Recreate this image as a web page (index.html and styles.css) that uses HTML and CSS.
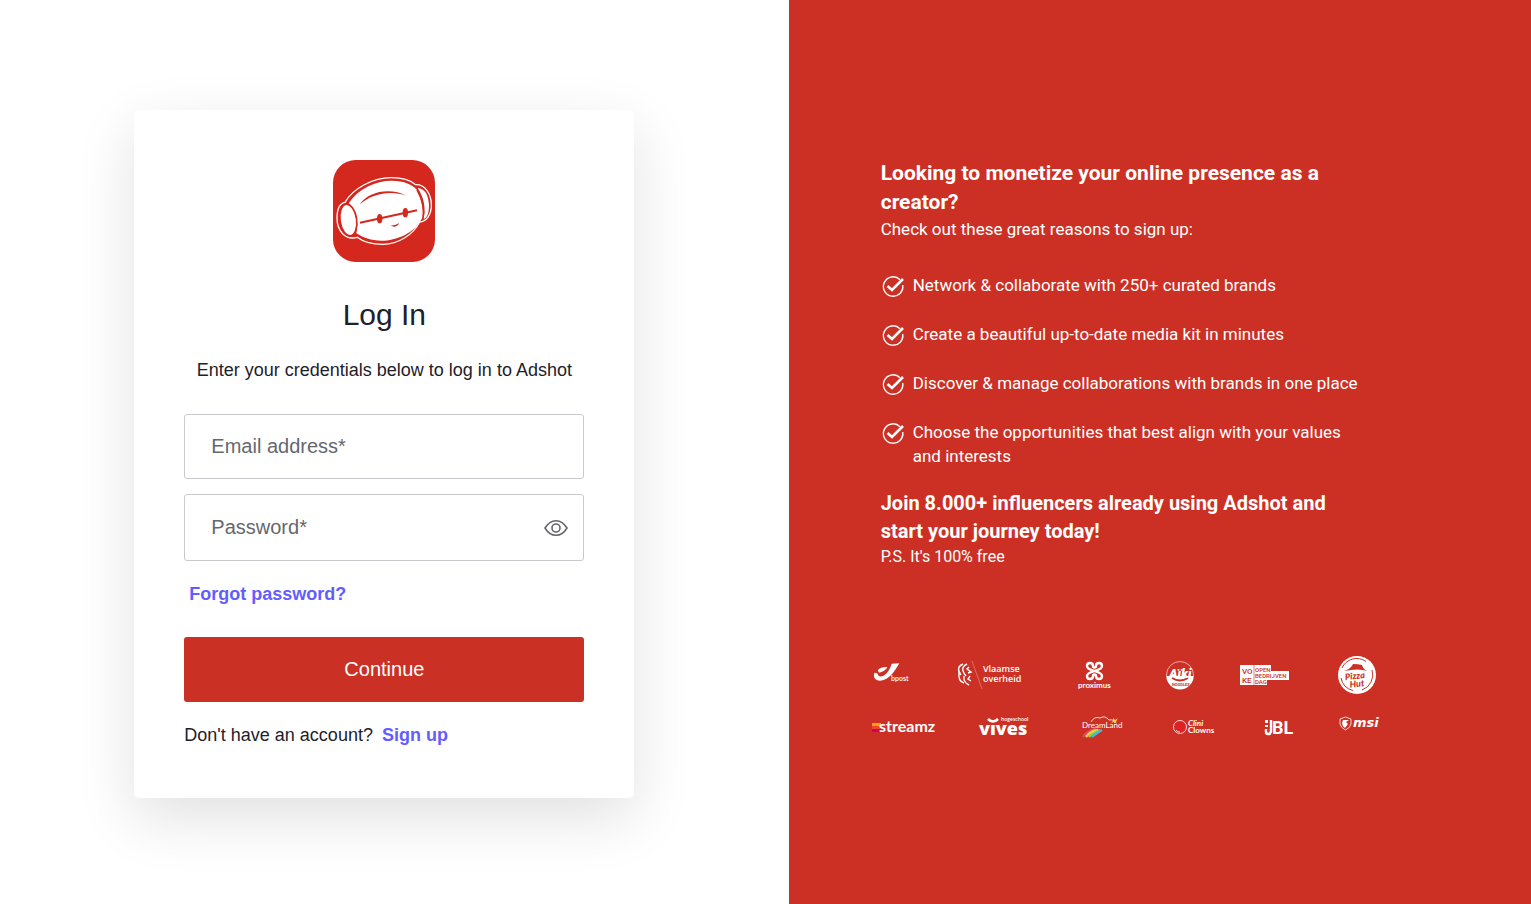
FILE: index.html
```html
<!DOCTYPE html>
<html lang="en">
<head>
    <meta charset="UTF-8">
    <meta name="viewport" content="width=device-width, initial-scale=1.0">
    <title>Log in | Adshot</title>
    <link rel="stylesheet" href="styles.css">
</head>
<body>
    <div class="page">
        <main class="login">
            <form class="card">
                <svg class="logo" viewBox="30 30 306 306" role="img" aria-label="Adshot">
                    <rect x="30" y="30" width="306" height="306" rx="68" fill="#d4271d"/>
                    <path d="M66 157C90 115 150 83 205 83C240 83 262 90 278 104C305 103 325 130 325 165C325 195 310 215 290 216C270 255 225 283 180 283C150 283 120 276 103 262C65 272 42 240 42 205C42 180 50 160 66 157z" fill="none" stroke="#fff" stroke-width="4"/>
                    <path d="M77 160C105 115 160 92 205 92C245 93 268 103 281 119C293 142 302 172 298 203C275 250 220 272 175 272C145 272 120 263 100 250C108 215 98 180 77 160z" fill="#fff"/>
                    <ellipse cx="76" cy="210" rx="25" ry="48" transform="rotate(-8 76 210)" fill="#fff" stroke="#d4271d" stroke-width="5"/>
                    <path d="M284 114C305 115 317 135 318 165C318 190 312 205 300 208C311 178 302 140 284 114z" fill="#fff"/>
                    <path d="M282 120C296 145 307 178 300 208" fill="none" stroke="#d4271d" stroke-width="4"/>
                    <path d="M110 164C135 122 205 112 250 137C205 120 145 130 110 164z" fill="#d4271d"/>
                    <path d="M111 218L282 181" stroke="#d4271d" stroke-width="6"/>
                    <ellipse cx="170" cy="206" rx="8" ry="14" fill="#d4271d"/>
                    <ellipse cx="247" cy="188" rx="8" ry="14" fill="#d4271d"/>
                    <path d="M202 226Q216 228 229 219Q218 237 202 226z" fill="#d4271d"/>
                </svg>
                <h1>Log In</h1>
                <p class="intro">Enter your credentials below to log in to Adshot</p>

                <div class="field email">
                    <input id="email" type="email" placeholder=" " required>
                    <label for="email">Email address*</label>
                </div>

                <div class="field password">
                    <input id="password" type="password" placeholder=" " required>
                    <label for="password">Password*</label>
                    <button class="show-password" type="button" aria-label="Show password">
                        <svg viewBox="0 0 24 18" width="24" height="18" fill="none" stroke="#65676e" stroke-width="1.6">
                            <path d="M1 9C4 4 8 1.7 12 1.7S20 4 23 9C20 14 16 16.3 12 16.3S4 14 1 9z"/>
                            <circle cx="12" cy="9" r="4"/>
                        </svg>
                    </button>
                </div>

                <a class="link forgot" href="#">Forgot password?</a>
                <button class="continue" type="submit">Continue</button>
                <p class="signup">Don't have an account? <a class="link" href="#">Sign up</a></p>
            </form>
        </main>

        <aside class="promo">
            <div class="promo-text">
                <h2>Looking to monetize your online presence as a creator?</h2>
                <p>Check out these great reasons to sign up:</p>
                <ul class="reasons">
                    <li>
                        <svg class="check" viewBox="0 0 24 24"><path d="M19 4.7A9.7 9.7 0 1 0 21.7 10" fill="none" stroke="#fff" stroke-width="1.4"/><path d="M6.5 11L11 15L22 4" fill="none" stroke="#fff" stroke-width="2.6"/></svg>
                        <span>Network &amp; collaborate with 250+ curated brands</span>
                    </li>
                    <li>
                        <svg class="check" viewBox="0 0 24 24"><path d="M19 4.7A9.7 9.7 0 1 0 21.7 10" fill="none" stroke="#fff" stroke-width="1.4"/><path d="M6.5 11L11 15L22 4" fill="none" stroke="#fff" stroke-width="2.6"/></svg>
                        <span>Create a beautiful up-to-date media kit in minutes</span>
                    </li>
                    <li>
                        <svg class="check" viewBox="0 0 24 24"><path d="M19 4.7A9.7 9.7 0 1 0 21.7 10" fill="none" stroke="#fff" stroke-width="1.4"/><path d="M6.5 11L11 15L22 4" fill="none" stroke="#fff" stroke-width="2.6"/></svg>
                        <span>Discover &amp; manage collaborations with brands in one place</span>
                    </li>
                    <li>
                        <svg class="check" viewBox="0 0 24 24"><path d="M19 4.7A9.7 9.7 0 1 0 21.7 10" fill="none" stroke="#fff" stroke-width="1.4"/><path d="M6.5 11L11 15L22 4" fill="none" stroke="#fff" stroke-width="2.6"/></svg>
                        <span>Choose the opportunities that best align with your values and interests</span>
                    </li>
                </ul>
                <h3>Join 8.000+ influencers already using Adshot and start your journey today!</h3>
                <p class="ps">P.S. It's 100% free</p>
            </div>

            <div class="brands">
                <!-- bpost -->
                <svg viewBox="0 0 80 40">
                    <path transform="translate(-8 -11) scale(.3333)" d="M51 75C56 68 68 65 79 66C76 74 66 81 55 83C52 79 50 78 51 75zM40 83C36 95 42 107 57 107C80 107 98 85 115 55L92 56C88 70 80 85 66 93C56 97 50 92 49 85z"/>
                    <text x="22" y="25" font-size="7" font-weight="600" font-family="Lato">bpost</text>
                </svg>
                <!-- Vlaamse overheid -->
                <svg viewBox="0 0 120 40">
                    <path d="M14 8C9 10 8 14 12 19M18 8C12 11 13 15 17 20M10 16C9 23 12 26 15 27M20 11L18 13L22 16L19 17M15 20C14 25 18 28 20 29M21 20L19 23L22 25" fill="none" stroke="#fff" stroke-width="1.4"/>
                    <path d="M23 5L33 33" stroke="#e8938b" stroke-width=".6"/>
                    <text x="34" y="16" font-size="9" font-weight="600">Vlaamse</text>
                    <text x="34" y="26" font-size="9" font-weight="600">overheid</text>
                </svg>
                <!-- Proximus -->
                <svg viewBox="0 0 80 40">
                    <path d="M25.5 15C22 14 18 13 18 10C18 6 24 6 24 10C24 11 25 11.5 25.5 11.5S27 11 27 10C27 6 33 6 33 10C33 13 29 14 25.5 15C29 16 33 17 33 20C33 24 27 24 27 20C27 19 26 18.5 25.5 18.5S24 19 24 20C24 24 18 24 18 20C18 17 22 16 25.5 15z" fill="none" stroke="#fff" stroke-width="2.4"/>
                    <text x="9" y="32" font-size="8" font-weight="700" font-family="Lato">proximus</text>
                </svg>
                <!-- Aiki Noodles -->
                <svg viewBox="0 0 80 40">
                    <circle cx="31" cy="19" r="13.5" fill="none" stroke="#fff" stroke-width=".6"/>
                    <path d="M17.5 20H44.5A13.5 13.5 0 0 1 17.5 20z"/>
                    <path d="M23 22Q31 27 39 22" fill="none" stroke="#cc3024" stroke-width="2"/>
                    <text x="23" y="30" font-size="4" font-weight="700" font-family="Roboto" class="red">NOODLES</text>
                    <text x="20" y="22" font-size="13" font-weight="900" font-style="italic" font-family="Roboto">Aïki</text>
                </svg>
                <!-- Voka open bedrijvendag -->
                <svg viewBox="0 0 100 40">
                    <path d="M11 9H42V15H60V24H38V29H11z"/>
                    <g class="red" font-family="Roboto">
                        <text x="13" y="18" font-size="8" font-weight="500">VO</text>
                        <text x="13" y="27" font-size="8" font-weight="500">KE</text>
                        <text x="26" y="16" font-size="6" font-weight="500">OPEN</text>
                        <text x="26" y="22" font-size="6" font-weight="500">BEDRIJVEN</text>
                        <text x="26" y="28" font-size="6" font-weight="500">DAG</text>
                    </g>
                    <path d="M25 9V29" stroke="#cc3024" stroke-width=".6"/>
                </svg>
                <!-- Pizza Hut -->
                <svg viewBox="0 0 60 40">
                    <circle cx="28" cy="19" r="19"/>
                    <path d="M13 12A16 16 0 0 1 37 5.5M43 14A16 16 0 0 1 33 34M12 22A16 16 0 0 0 24 34.5" fill="none" stroke="#cc3024"/>
                    <path d="M15 15Q22 13 24 8Q29 8 33 9Q34 13 38 15Q30 12 15 15z" class="red"/>
                    <g class="red" font-family="Lato" font-size="9" font-weight="900" font-style="italic" transform="rotate(-6 27 22)">
                        <text x="16" y="23">Pizza</text>
                        <text x="20" y="31">Hut</text>
                    </g>
                </svg>
                <!-- Streamz -->
                <svg viewBox="0 0 80 40">
                    <path d="M3 15H12V18H3z" fill="#fa9d1c"/><path d="M3 18H11V21H3z" fill="#ef4723"/><path d="M3 21H12V24H3z" fill="#d2005f"/>
                    <text x="10" y="24" font-size="16" font-weight="700" font-family="Lato">streamz</text>
                </svg>
                <!-- Vives -->
                <svg viewBox="0 0 120 40">
                    <text x="30" y="27" font-size="18" font-weight="800">vıves</text>
                    <path d="M39 11Q44 16 49 11" fill="none" stroke="#fff" stroke-width="2.5"/>
                    <text x="52" y="13" font-size="5" font-weight="600">hogeschool</text>
                </svg>
                <!-- DreamLand -->
                <svg viewBox="0 0 80 40">
                    <path d="M22 14Q25 8 31 10Q36 7 40 12Q45 11 46 15" fill="none" stroke="#fff" stroke-width=".8"/>
                    <path d="M44 10L46 12L49 10L47 14L48 16L45 14L42 15L44 13z" fill="#ffc83d"/>
                    <text x="13" y="20" font-size="8" font-family="Lato">DreamLand</text>
                    <g fill="none" stroke-width="2.4">
                        <path d="M14 29Q19 22 27 21" stroke="#e7436c"/><path d="M17 29Q21 23 29 22" stroke="#ffd43b"/>
                        <path d="M20 29Q23 25 31 22" stroke="#8bd450"/><path d="M23 29Q26 26 33 22" stroke="#41b7e8"/>
                    </g>
                </svg>
                <!-- CliniClowns -->
                <svg viewBox="0 0 80 40">
                    <circle cx="31" cy="19" r="6.5" fill="#dc2222" stroke="#fff" stroke-width=".8"/>
                    <path d="M27 22Q28 24 31 24" fill="none" stroke="#fff" stroke-width=".8"/>
                    <text x="39" y="18" font-size="8" font-weight="700" font-family="Lato" font-style="italic">Clini</text>
                    <text x="39" y="25" font-size="8" font-weight="700" font-family="Lato">Clowns</text>
                </svg>
                <!-- JBL -->
                <svg viewBox="0 0 100 40">
                    <path d="M36 12H39V15H36zM36 17H39V19H36z"/>
                    <path d="M37 21V24Q37 26 39 26Q42 26 42 23V12" fill="none" stroke="#fff" stroke-width="2.4"/>
                    <text x="43" y="26" font-size="18" font-weight="700" font-family="Roboto">BL</text>
                </svg>
                <!-- MSI -->
                <svg viewBox="0 0 60 40">
                    <path d="M16.5 9L22 11V16Q21 20 16.5 22Q12 20 11 16V11z" fill="none" stroke="#fff" stroke-width=".8"/>
                    <path d="M14 12L20 12L17 14L19 16L16 20Q13 18 13 15z"/>
                    <text x="24" y="19" font-size="13" font-weight="700" font-style="italic" font-family="DejaVu Sans">msi</text>
                </svg>
            </div>
        </aside>
    </div>
</body>
</html>
```
FILE: styles.css
```css
* {
    box-sizing: border-box;
}

body {
    margin: 0;
    font-family: "Liberation Sans", Arial, sans-serif;
    color: #1e212a;
    background-color: #fff;
}

h1, h2, h3, p, ul {
    margin: 0;
    padding: 0;
}

.page {
    display: grid;
    grid-template-columns: 17fr 16fr;
    min-height: 100vh;
}

/* login side */

.login {
    display: flex;
    justify-content: center;
    align-items: flex-start;
    padding: 110px 20px 60px 0;
}

.card {
    display: flex;
    flex-direction: column;
    width: 500px;
    padding: 50px;
    border-radius: 5px;
    background-color: #fff;
    box-shadow: 0 20px 60px rgba(0, 0, 0, 0.12);
}

.logo {
    width: 102px;
    height: 102px;
    align-self: center;
}

h1 {
    margin-top: 34px;
    font-size: 30px;
    font-weight: normal;
    line-height: 38px;
    text-align: center;
}

.intro {
    margin: 24px 0 32px;
    font-size: 18px;
    line-height: 24px;
    text-align: center;
}

.field {
    position: relative;
    display: flex;
    align-items: center;
    font-size: 20px;
}

.field input {
    width: 100%;
    height: 100%;
    padding: 0 60px 0 26px;
    border: 1px solid #c9cace;
    border-radius: 3px;
    background-color: #fff;
    color: inherit;
    font: inherit;
}

/* the label sits over the empty input */
.field label {
    position: absolute;
    left: 27px;
    color: #65676e;
    cursor: text;
}

.field input:focus + label,
.field input:not(:placeholder-shown) + label {
    top: 4px;
    font-size: 14px;
}

.email {
    height: 65px;
}

.password {
    height: 67px;
    margin-top: 15px;
}

.show-password {
    position: absolute;
    right: 16px;
    display: flex;
    padding: 0;
    border: none;
    background: none;
    cursor: pointer;
}

.link {
    color: #635dff;
    font-weight: bold;
    text-decoration: none;
}

.forgot {
    align-self: flex-start;
    margin: 21px 0 31px 5px;
    font-size: 18px;
    line-height: 24px;
}

.continue {
    height: 65px;
    border: none;
    border-radius: 3px;
    background-color: #cb3024;
    color: #fff;
    font-family: inherit;
    font-size: 20px;
    cursor: pointer;
}

.signup {
    margin-top: 21px;
    font-size: 18px;
    line-height: 25px;
}

.signup .link {
    margin-left: 4px;
}

/* promo side */

.promo {
    padding: 159px 0 60px 80px;
    background-color: #cc3024;
    color: #fff;
    font-family: Roboto, sans-serif;
}

.promo-text {
    max-width: 492px;
    padding-left: 12px;
    font-size: 17px;
    line-height: 24px;
}

h2 {
    font-size: 21px;
    line-height: 29px;
}

h3 {
    margin-top: 21px;
    font-size: 20px;
    line-height: 28px;
}

.reasons {
    display: grid;
    gap: 23px;
    margin-top: 32px;
    list-style: none;
}

.reasons li {
    display: flex;
    gap: 8px;
}

.check {
    flex: none;
    width: 24px;
    height: 24px;
    margin-top: 2px;
}

.ps {
    font-size: 16px;
}

.brands {
    display: grid;
    grid-template-columns: 80px 120px 80px 80px 100px 60px;
    row-gap: 12px;
    margin-top: 87px;
}

.brands svg {
    height: 40px;
    fill: #fff;
    font-family: "Open Sans", sans-serif;
}

.brands .red {
    fill: #cc3024;
}
```
